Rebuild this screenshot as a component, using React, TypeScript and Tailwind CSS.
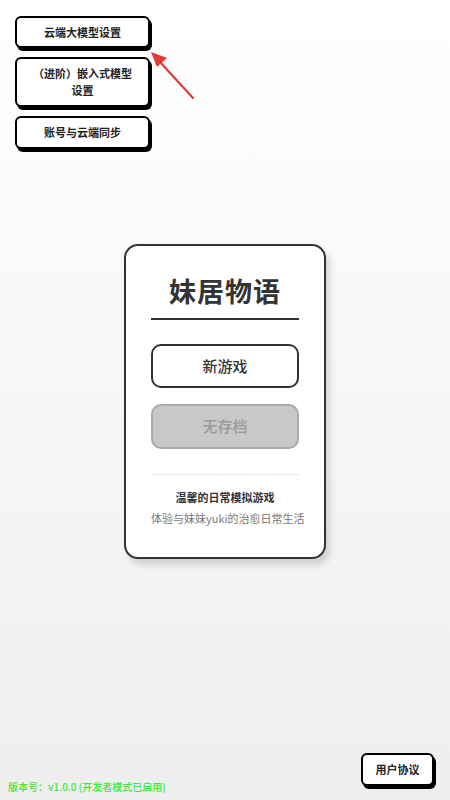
import React from "react";

const font = { fontFamily: '"Noto Sans CJK SC", "Noto Sans", sans-serif' };

function SideButton({ children, h }: { children: React.ReactNode; h: string }) {
  return (
    <button
      className={`w-[135px] ${h} rounded-[6px] border-2 border-black bg-white shadow-[2px_3px_0_#000] text-[11px] font-semibold text-[#222] leading-[17px] px-3 flex items-center justify-center text-center`}
    >
      {children}
    </button>
  );
}

export default function App() {
  return (
    <div
      style={font}
      className="relative w-full h-[800px] overflow-hidden bg-gradient-to-b from-white to-[#eeeeee] flex flex-col"
    >
      <div className="flex flex-col gap-[9px] pl-[15px] pt-[16px]">
        <SideButton h="h-[32px]">云端大模型设置</SideButton>
        <SideButton h="h-[50px]">
          <span>
            （进阶）嵌入式模型
            <br />
            设置
          </span>
        </SideButton>
        <SideButton h="h-[33px]">账号与云端同步</SideButton>
      </div>

      <div className="flex justify-center mt-[95px]">
        <div className="w-[202px] h-[315px] rounded-[14px] border-2 border-[#333] bg-white shadow-[4px_6px_6px_rgba(0,0,0,0.14)] px-[25px] pt-[27px] flex flex-col">
          <div className="text-[27px] leading-[36px] font-bold text-[#333] text-center tracking-[1px]">
            妹居物语
          </div>
          <div className="mt-[9px] h-[2px] bg-[#333]" />
          <button className="mt-[24px] h-[44px] rounded-[10px] border-2 border-[#333] bg-white text-[15px] font-medium text-[#333]">
            新游戏
          </button>
          <button className="mt-[16px] h-[45px] rounded-[10px] border-2 border-[#aaa] bg-[#c8c8c8] text-[15px] font-medium text-[#999]">
            无存档
          </button>
          <div className="mt-[25px] h-px bg-[#eaeaea]" />
          <div className="mt-[13px] text-[11px] leading-[18px] font-bold text-[#333] text-center">
            温馨的日常模拟游戏
          </div>
          <div className="mt-[3px] text-[11px] leading-[18px] text-[#777] text-center whitespace-nowrap">
            体验与妹妹yuki的治愈日常生活
          </div>
        </div>
      </div>

      <div className="mt-auto flex items-end justify-between pl-[8px] pr-[16px] pb-[14px]">
        <div className="text-[10px] leading-[12px] font-medium text-[#3de83d] mb-[-7px]">
          版本号：v1.0.0 (开发者模式已启用)
        </div>
        <button className="w-[73px] h-[33px] rounded-[6px] border-2 border-black bg-white shadow-[2px_3px_0_#000] text-[11px] font-semibold text-[#222]">
          用户协议
        </button>
      </div>

      <svg
        className="absolute left-0 top-0 pointer-events-none"
        width="450"
        height="120"
        viewBox="0 0 450 120"
      >
        <line x1="193" y1="98" x2="160" y2="62" stroke="#e53935" strokeWidth="2.2" strokeLinecap="round" />
        <polygon points="151,52 167,58 157,67" fill="#e53935" />
      </svg>
    </div>
  );
}
